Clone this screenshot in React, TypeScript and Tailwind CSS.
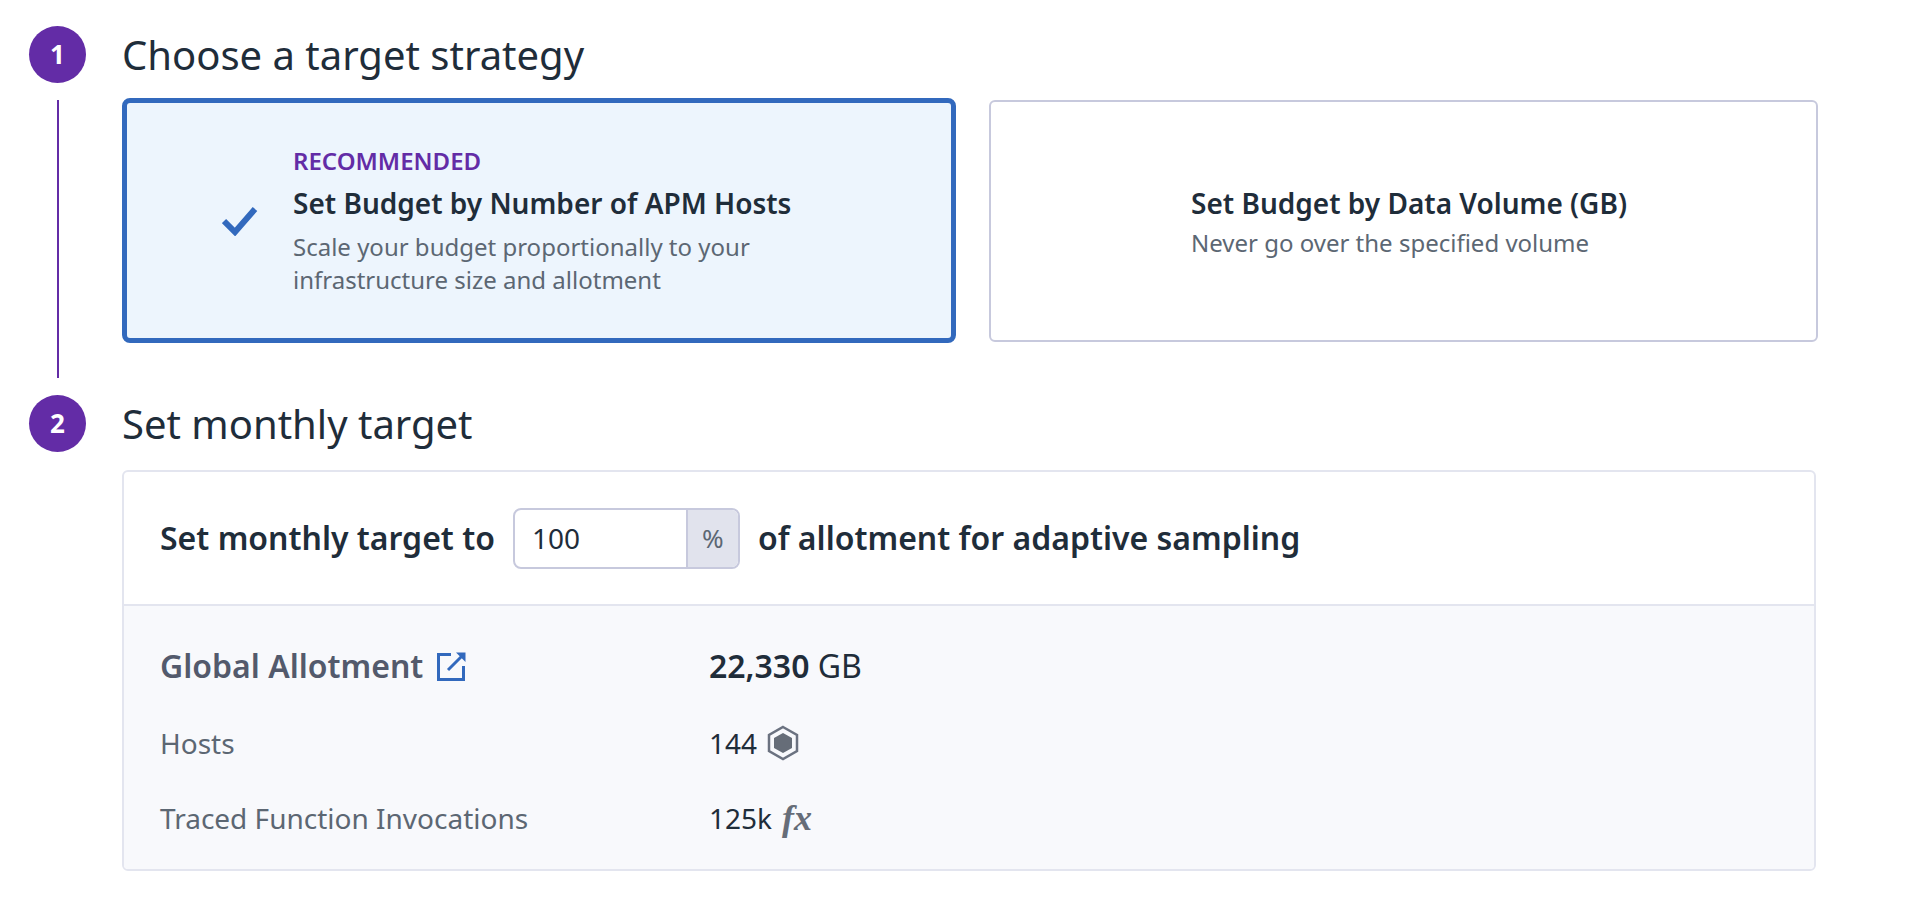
const HexIcon = () => (
  <svg className="w-[32px] h-[36px] ml-[10px]" viewBox="0 0 32 36">
    <path d="M16 2 L30 10 L30 26 L16 34 L2 26 L2 10 Z" fill="none" stroke="#6b7280" strokeWidth="2.5" />
    <path d="M16 8 L25 13 L25 23 L16 28 L7 23 L7 13 Z" fill="#666d78" />
  </svg>
);

const LinkIcon = () => (
  <svg className="w-[30px] h-[30px] ml-[14px]" viewBox="0 0 30 30" fill="none" stroke="#3269bd" strokeWidth="3">
    <path d="M14 3.5 H1.5 V28.5 H26.5 V15" />
    <path d="M11 19 L27 3" />
    <path d="M19 1.5 H28.5 V11" fill="#3269bd" strokeWidth="0" />
  </svg>
);

const StepBadge = ({ n }: { n: number }) => (
  <div className="w-[57px] h-[57px] rounded-full bg-[#632ca6] text-white flex items-center justify-center text-[26px] font-bold shrink-0">
    {n}
  </div>
);

export default function App() {
  return (
    <div className="min-h-screen bg-white pl-[29px] pt-[26px] font-['Noto_Sans',sans-serif] text-[#1f2d3a]">
      {/* step 1 */}
      <div className="flex gap-[36px] w-[1787px]">
        <div className="flex flex-col items-center w-[57px] shrink-0">
          <StepBadge n={1} />
          <div className="w-[2px] h-[278px] mt-[17px] bg-[#632ca6]" />
        </div>
        <div className="flex-1">
          <h1 className="text-[40px] leading-[57px]">Choose a target strategy</h1>
          <div className="flex gap-[33px] mt-[15px]">
            <div className="w-[834px] h-[245px] rounded-[8px] border-[5px] border-[#3269bd] bg-[#edf5fd] flex items-center pl-[95px]">
              <svg className="w-[36px] h-[30px] mr-[35px] shrink-0" viewBox="0 0 36 30" fill="none" stroke="#3269bd" strokeWidth="6">
                <path d="M2 15 L13 26 L33 3" />
              </svg>
              <div>
                <div className="text-[24px] leading-[32px] font-semibold text-[#632ca6]">RECOMMENDED</div>
                <div className="text-[28px] leading-[40px] font-semibold mt-[6px]">Set Budget by Number of APM Hosts</div>
                <div className="text-[24px] leading-[33px] text-[#5c6773] mt-[7px]">
                  Scale your budget proportionally to your
                  <br />
                  infrastructure size and allotment
                </div>
              </div>
            </div>
            <div className="w-[829px] h-[242px] mt-[2px] rounded-[6px] border-2 border-[#c7c9dd] bg-white flex items-center pl-[200px]">
              <div>
                <div className="text-[28px] leading-[40px] font-semibold">Set Budget by Data Volume (GB)</div>
                <div className="text-[24px] leading-[33px] text-[#5c6773] mt-[3px]">Never go over the specified volume</div>
              </div>
            </div>
          </div>
        </div>
      </div>

      {/* step 2 */}
      <div className="flex gap-[36px] w-[1787px] mt-[17px]">
        <StepBadge n={2} />
        <div className="flex-1">
          <h1 className="text-[40px] leading-[57px]">Set monthly target</h1>
          <div className="mt-[18px] w-[1694px] h-[401px] rounded-[6px] border-2 border-[#e3e5ef] flex flex-col overflow-hidden">
            <div className="h-[134px] flex items-center pl-[36px] text-[32px] font-semibold border-b-2 border-[#e3e5ef] shrink-0">
              <span>Set monthly target to</span>
              <div className="flex w-[227px] h-[61px] ml-[18px] mr-[18px] rounded-[8px] border-2 border-[#c7c9dd] overflow-hidden font-normal">
                <div className="flex-1 flex items-center pl-[17px] text-[28px]">100</div>
                <div className="w-[52px] bg-[#e1e3ed] border-l-2 border-[#c7c9dd] flex items-center justify-center text-[26px] text-[#5c6773]">%</div>
              </div>
              <span>of allotment for adaptive sampling</span>
            </div>
            <div className="flex-1 bg-[#f8f9fc] pl-[36px] pt-[35px]">
              <div className="flex items-center h-[50px]">
                <div className="w-[549px] flex items-center text-[32px] font-semibold text-[#535a6c]">
                  Global Allotment
                  <LinkIcon />
                </div>
                <div className="text-[32px]">
                  <span className="font-semibold">22,330</span> GB
                </div>
              </div>
              <div className="flex items-center h-[50px] mt-[27px]">
                <div className="w-[549px] text-[28px] text-[#5c6773]">Hosts</div>
                <div className="flex items-center text-[28px]">
                  144
                  <HexIcon />
                </div>
              </div>
              <div className="flex items-center h-[50px] mt-[25px]">
                <div className="w-[549px] text-[28px] text-[#5c6773]">Traced Function Invocations</div>
                <div className="flex items-center text-[28px]">
                  125k
                  <span className="ml-[10px] font-['Liberation_Serif',serif] italic font-bold text-[36px] leading-none text-[#666d78]">fx</span>
                </div>
              </div>
            </div>
          </div>
        </div>
      </div>
    </div>
  );
}
